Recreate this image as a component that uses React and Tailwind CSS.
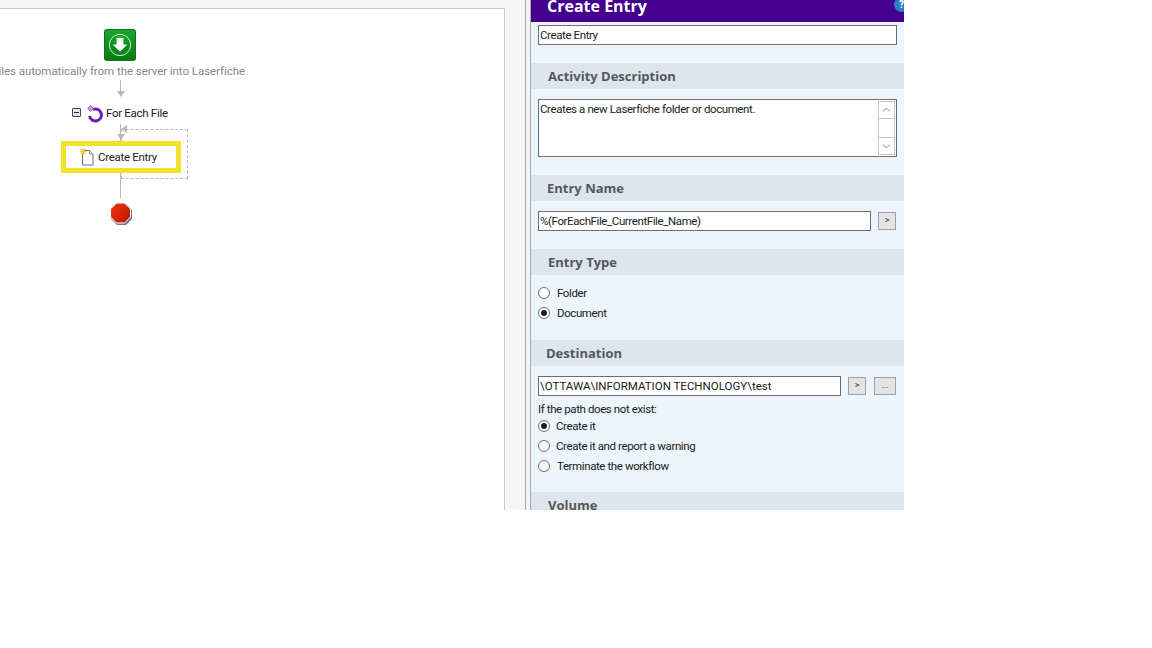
import React from 'react';

const font = { fontFamily: 'Roboto, "Liberation Sans", sans-serif' };
const headingFont = { fontFamily: '"Open Sans", sans-serif' };

const SectionHeader = ({ label, pad = 'pl-[17px]' }) => (
  <div className={`h-[26px] ${pad} flex items-center bg-[#dde5ee] pt-[2px] text-[13px] font-bold text-[#55585c]`} style={headingFont}>
    {label}
  </div>
);

const Radio = ({ label, checked, gap = 'gap-[7px]' }) => (
  <div className={`flex h-5 items-center ${gap} text-[11.5px] tracking-[-0.4px] text-[#1a1a1a]`}>
    <span className="flex h-[12px] w-[12px] items-center justify-center rounded-full border border-[#6f6f6f] bg-white">
      {checked && <span className="h-[6px] w-[6px] rounded-full bg-[#1a1a1a]" />}
    </span>
    <span className="pt-[2px]">{label}</span>
  </div>
);

const TextBox = ({ value, className = '', tracking = 'tracking-[-0.4px]' }) => (
  <div className={`flex h-5 items-center border border-[#6e6e6e] bg-white pl-px pt-[2px] text-[11.5px] text-[#1a1a1a] ${tracking} ${className}`}>
    {value}
  </div>
);

const SmallButton = ({ label, className = 'w-[18px]' }) => (
  <div className={`flex h-[18px] items-center justify-center border border-[#a0a0a0] bg-[#e4e4e4] text-[9px] text-[#333] ${className}`}>
    {label}
  </div>
);

const StartIcon = () => (
  <svg width="32" height="32" viewBox="0 0 33 33">
    <defs>
      <linearGradient id="startGreen" x1="0" y1="0" x2="0" y2="1">
        <stop offset="0" stopColor="#1aa62a" />
        <stop offset="1" stopColor="#067a12" />
      </linearGradient>
    </defs>
    <rect x="0.5" y="0.5" width="32" height="32" rx="2" fill="url(#startGreen)" stroke="#0a6e14" />
    <circle cx="16.5" cy="16.5" r="11" fill="none" stroke="#d9f2d9" strokeWidth="1" />
    <path d="M13 9h7v7h4l-7.500 7.500L9 16h4z" fill="#fff" />
  </svg>
);

const LoopIcon = () => (
  <svg width="18" height="18" viewBox="0 0 18 18">
    <path d="M6 4.500a6 6 0 1 1-3.500 6.500" fill="none" stroke="#6a1fb5" strokeWidth="3" />
    <path d="M3.500 0.500l3 3-3 3-3-3z" fill="#b79be0" stroke="#6a1fb5" strokeWidth="0.500" />
  </svg>
);

const PageIcon = () => (
  <svg width="16" height="18" viewBox="0 0 16 18">
    <path d="M3.500 2.500h7l3.500 3.500v11h-10.500z" fill="#fbfbf8" stroke="#6e6e6e" strokeWidth="1" />
    <path d="M10.500 2.500v3.500h3.500" fill="#e6e6e6" stroke="#8e8e8e" strokeWidth="1" />
    <path d="M4 0v7M0.500 3.500h7M1.500 1l5 5M6.500 1l-5 5" stroke="#f0cf3c" strokeWidth="1.200" />
  </svg>
);

const StopIcon = () => (
  <svg width="24" height="24" viewBox="0 0 24 24">
    <defs>
      <linearGradient id="stopRed" x1="0" y1="0" x2="1" y2="1">
        <stop offset="0" stopColor="#ee3a0c" />
        <stop offset="1" stopColor="#b81204" />
      </linearGradient>
    </defs>
    <path d="M8 2h9l6 6v9l-6 6H8l-6-6V8z" fill="#777" />
    <path d="M7.500 1h8l6 6v8l-6 6h-8l-6-6V7z" fill="url(#stopRed)" stroke="#fff" strokeWidth="1" />
  </svg>
);

const Arrow = ({ className }) => (
  <div className={`absolute h-0 w-0 border-x-[4px] border-t-[6px] border-x-transparent border-t-[#b9b9b9] ${className}`} />
);

// the workflow canvas, nodes sit at their place on the diagram
const Diagram = () => (
  <div className="relative min-w-0 flex-1 overflow-hidden border-r border-t border-[#c8c8c8] bg-white">
    <div className="absolute left-[104px] top-[20px]"><StartIcon /></div>
    <div className="absolute left-[-5px] top-[54px] flex w-[250px] justify-end whitespace-nowrap text-[11.5px] tracking-[-0.05px] text-[#85888c]">
      Pulls files automatically from the server into Laserfiche
    </div>
    <div className="absolute left-[120px] top-[71px] h-[14px] w-px bg-[#b9b9b9]" />
    <Arrow className="left-[117px] top-[82px]" />

    <div className="absolute left-[72px] top-[99px] flex h-[9px] w-[9px] items-center justify-center rounded-[1px] border border-[#34495e] bg-[#dfe7ef]">
      <span className="h-px w-[5px] bg-[#1c2a3a]" />
    </div>
    <div className="absolute left-[87px] top-[96px]"><LoopIcon /></div>
    <div className="absolute left-[106px] top-[96px] text-[11.5px] tracking-[-0.3px] text-[#1a1a1a]">For Each File</div>

    <div className="absolute left-[120px] top-[115px] h-[18px] w-px bg-[#b9b9b9]" />
    <Arrow className="left-[117px] top-[125px]" />
    <div className="absolute left-[121px] top-[120px] h-[50px] w-[67px] border border-dashed border-[#b9b9b9]" />
    <div className="absolute left-[121px] top-[116px] h-0 w-0 border-y-[4px] border-r-[6px] border-y-transparent border-r-[#b9b9b9]" />

    <div className="absolute left-[61px] top-[132px] flex h-[32px] w-[120px] items-center gap-[3px] border-[5px] border-[#f2e22e] bg-white pl-[13px] text-[11.5px] tracking-[-0.3px] text-[#1a1a1a]">
      <PageIcon />
      <span className="pt-[2px]">Create Entry</span>
    </div>

    <div className="absolute left-[120px] top-[164px] h-[25px] w-px bg-[#b9b9b9]" />
    <div className="absolute left-[109px] top-[193px]"><StopIcon /></div>
  </div>
);

const Panel = () => (
  <div className="h-full w-[373px] shrink-0 overflow-hidden bg-[#ecf4fd]">
    <div className="relative flex h-[22px] items-end bg-[#44008f] pl-4">
      <span className="text-[16px] font-bold leading-[32px] text-white" style={headingFont}>Create Entry</span>
      <span className="absolute right-[-5px] top-[-3px] flex h-[15px] w-[15px] items-center justify-center rounded-full bg-[#2f7fc4] text-[10px] font-bold text-white">?</span>
    </div>

    <div className="px-[7px] pb-[18px] pt-[3px]">
      <TextBox value="Create Entry" className="w-[359px]" />
    </div>

    <SectionHeader label="Activity Description" />
    <div className="px-[7px] pb-[18px] pt-[10px]">
      <div className="flex h-[58px] w-[359px] justify-between border border-[#6e6e6e] bg-white pl-px pr-px text-[11.5px] tracking-[-0.4px] text-[#1a1a1a]">
        <span className="pt-px">Creates a new Laserfiche folder or document.</span>
        <div className="my-[1px] flex w-[17px] flex-col justify-between border border-[#c4c4c4] text-[#767676]">
          <svg className="h-[17px] w-[15px] border-b border-[#c4c4c4]" viewBox="0 0 15 17"><path d="M4 10l3.500-3.500L11 10" fill="none" stroke="currentColor" /></svg>
          <svg className="h-[17px] w-[15px] border-t border-[#c4c4c4]" viewBox="0 0 15 17"><path d="M4 7l3.500 3.500L11 7" fill="none" stroke="currentColor" /></svg>
        </div>
      </div>
    </div>

    <SectionHeader label="Entry Name" pad="pl-[16px]" />
    <div className="flex items-center gap-[7px] pb-[18px] pl-[7px] pt-[10px]">
      <TextBox value="%(ForEachFile_CurrentFile_Name)" className="w-[333px]" />
      <SmallButton label=">" />
    </div>

    <SectionHeader label="Entry Type" />
    <div className="pb-[17px] pl-[7px] pt-[8px]">
      <Radio label="Folder" />
      <Radio label="Document" checked />
    </div>

    <SectionHeader label="Destination" pad="pl-[15px]" />
    <div className="pb-[16px] pl-[7px] pt-[10px]">
      <div className="flex items-center">
        <TextBox value="\OTTAWA\INFORMATION TECHNOLOGY\test" tracking="tracking-[0px]" className="w-[303px]" />
        <SmallButton label=">" className="ml-[7px] w-[18px]" />
        <SmallButton label="..." className="ml-[8px] w-[22px]" />
      </div>
      <div className="mt-[5px] h-[16px] text-[11.5px] leading-[16px] tracking-[-0.4px] text-[#1a1a1a]">If the path does not exist:</div>
      <div className="mt-[-1px]">
        <Radio label="Create it" gap="gap-[6px]" checked />
        <Radio label="Create it and report a warning" gap="gap-[6px]" />
        <Radio label="Terminate the workflow" />
      </div>
    </div>

    <SectionHeader label="Volume" />
  </div>
);

export default function App() {
  return (
    <div className="h-[648px] w-[1152px] overflow-hidden bg-white" style={font}>
      <div className="flex h-[510px] w-[904px]">
        <div className="flex h-full w-[531px] shrink-0 border-r border-[#a9a9a9] bg-[#f5f5f5]">
          <div className="mt-[8px] flex min-w-0 flex-1 pr-[20px]">
            <Diagram />
          </div>
          <div className="w-[5px] border-l border-[#a9a9a9]" />
        </div>
        <Panel />
      </div>
    </div>
  );
}
